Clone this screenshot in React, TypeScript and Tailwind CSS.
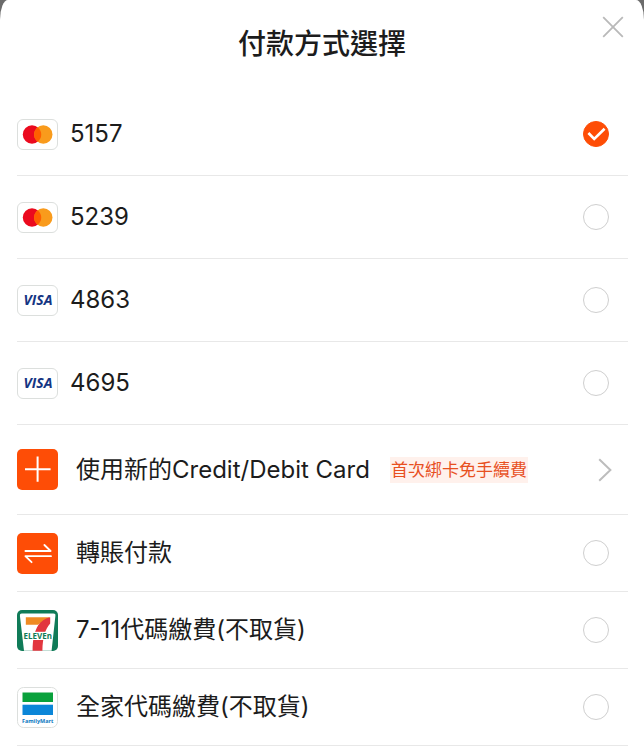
import React, { useState } from 'react';

type PaymentOption = {
    id: string;
    label: string;
    icon: React.ReactNode;
};

const MastercardIcon: React.FC = () => (
    <span className="flex h-[31px] w-[41px] shrink-0 items-center justify-center rounded-md border border-[#dcdfdd] bg-white">
        <svg width="31" height="19" viewBox="0 0 31 19" aria-hidden="true">
            <circle cx="10" cy="9.5" r="9.2" fill="#eb0a1e" />
            <circle cx="21.3" cy="9.5" r="9.2" fill="#f99b1c" />
            <path d="M15.65 2.2a9.2 9.2 0 0 1 0 14.6a9.2 9.2 0 0 1 0-14.6z" fill="#ff5f00" />
        </svg>
    </span>
);

const VisaIcon: React.FC = () => (
    <span className="flex h-[31px] w-[41px] shrink-0 items-center justify-center rounded-md border border-[#dcdfdd] bg-white pl-px font-['Open_Sans',sans-serif] text-[14px] leading-4 font-bold text-[#143583] italic">
        VISA
    </span>
);

const TransferIcon: React.FC = () => (
    <svg className="shrink-0" width="41" height="41" viewBox="0 0 41 41" aria-hidden="true">
        <rect width="41" height="41" rx="5" fill="#fe4d06" />
        <path
            d="M8.4 18h25.2l-6.2-6M34 23.2H8.4l6.2 6"
            fill="none"
            stroke="#fff"
            strokeWidth="1.8"
            strokeLinejoin="round"
            strokeLinecap="round"
        />
    </svg>
);

const PlusIcon: React.FC = () => (
    <svg className="shrink-0" width="41" height="41" viewBox="0 0 41 41" aria-hidden="true">
        <rect width="41" height="41" rx="5" fill="#fe4d06" />
        <path d="M20.6 7.5v25.2M8 20.2h25.6" stroke="#fff" strokeWidth="2" />
    </svg>
);

const SevenElevenIcon: React.FC = () => (
    <svg className="shrink-0" width="41" height="41" viewBox="0 0 41 41" aria-hidden="true">
        <rect width="41" height="41" rx="5" fill="#107b58" />
        <path d="M5 3.4h31.4a2 2 0 0 1 2 2.3L34.6 40.8H7L2.9 5.7a2 2 0 0 1 2.1-2.3z" fill="#fff" />
        <path d="M8.8 7.3h24.4L21 14.8H8.8z" fill="#ef8a22" />
        <path d="M33.2 7.3v6.2c-5 5.6-7.4 13.4-7.8 27.3h-9.8c0-11.6 1.6-19 5.6-25.6c3.4-4.4 7-6.9 12-7.9z" fill="#e2363f" />
        <rect x="7.2" y="21.8" width="27" height="8.2" fill="#fff" />
        <text
            x="20.7"
            y="28.8"
            textAnchor="middle"
            fontFamily="Noto Sans, sans-serif"
            fontSize="8"
            fontWeight="700"
            fill="#107b58"
        >
            ELEVEn
        </text>
    </svg>
);

const FamilyMartIcon: React.FC = () => (
    <svg className="shrink-0" width="41" height="41" viewBox="0 0 41 41" aria-hidden="true">
        <rect x="0.5" y="0.5" width="40" height="40" rx="6" fill="#fff" stroke="#dcdfdd" />
        <rect x="5.5" y="5.5" width="30.5" height="9.5" fill="#09a13c" />
        <rect x="5.5" y="17.7" width="30.5" height="10.3" fill="#0b86d8" />
        <text
            x="20.7"
            y="35.5"
            textAnchor="middle"
            fontFamily="Open Sans, sans-serif"
            fontSize="5.5"
            fontWeight="700"
            fill="#0b78bf"
        >
            FamilyMart
        </text>
    </svg>
);

const cards: PaymentOption[] = [
    { id: 'card-5157', label: '5157', icon: <MastercardIcon /> },
    { id: 'card-5239', label: '5239', icon: <MastercardIcon /> },
    { id: 'card-4863', label: '4863', icon: <VisaIcon /> },
    { id: 'card-4695', label: '4695', icon: <VisaIcon /> },
];

const others: PaymentOption[] = [
    { id: 'transfer', label: '轉賬付款', icon: <TransferIcon /> },
    { id: 'seven', label: '7-11代碼繳費(不取貨)', icon: <SevenElevenIcon /> },
    { id: 'family', label: '全家代碼繳費(不取貨)', icon: <FamilyMartIcon /> },
];

type RadioProps = {
    id: string;
    checked: boolean;
    onChange: () => void;
};

const Radio: React.FC<RadioProps> = ({ id, checked, onChange }) => (
    <span className="relative ml-auto flex shrink-0">
        <input
            type="radio"
            id={id}
            name="payment"
            checked={checked}
            onChange={onChange}
            className="size-[26px] appearance-none rounded-full border border-[#cfcfcf] bg-white checked:border-[#fe4d06] checked:bg-[#fe4d06]"
        />
        {checked && (
            <svg className="pointer-events-none absolute inset-0" width="26" height="26" viewBox="0 0 26 26" aria-hidden="true">
                <path d="M5.4 12l5.8 6L21.6 7.8" fill="none" stroke="#fff" strokeWidth="2.6" />
            </svg>
        )}
    </span>
);

const App: React.FC = () => {
    const [selected, setSelected] = useState<string>('card-5157');

    return (
        <div className="min-h-screen bg-[#6b6b6b] font-[Inter,'Noto_Sans_CJK_TC',sans-serif] text-[#1c1c1c]">
            <main className="min-h-screen rounded-t-[8px_20px] bg-white">
                <header className="relative flex h-[93px] justify-center pt-6">
                    <h1 className="text-[28px] leading-10 font-medium">付款方式選擇</h1>
                    <button type="button" aria-label="關閉" className="absolute top-4 right-5">
                        <svg width="22" height="22" viewBox="0 0 22 22" aria-hidden="true">
                            <path d="M1.2 1.2l19.6 19.6M20.8 1.2L1.2 20.8" stroke="#b9b9b9" strokeWidth="1.8" />
                        </svg>
                    </button>
                </header>

                <div className="mr-4 ml-[17px] text-2xl">
                    {cards.map((card) => (
                        <label
                            key={card.id}
                            htmlFor={card.id}
                            className="flex min-h-[83px] items-center gap-3 border-b border-[#e8e8e8] pr-[19px]"
                        >
                            {card.icon}
                            <span>{card.label}</span>
                            <Radio id={card.id} checked={selected === card.id} onChange={() => setSelected(card.id)} />
                        </label>
                    ))}

                    <button
                        type="button"
                        className="flex min-h-[90px] w-full items-center gap-[18px] border-b border-[#e8e8e8] pr-4 text-left"
                    >
                        <PlusIcon />
                        <span>使用新的Credit/Debit Card</span>
                        <span className="ml-0.5 bg-[#fff1ec] px-px text-[17px] leading-[26px] text-[#e8501f]">首次綁卡免手續費</span>
                        <svg className="ml-auto shrink-0" width="14" height="24" viewBox="0 0 14 24" aria-hidden="true">
                            <path d="M1.2 1.2L12.4 12L1.2 22.8" fill="none" stroke="#bdbdbd" strokeWidth="2" />
                        </svg>
                    </button>

                    {others.map((option) => (
                        <label
                            key={option.id}
                            htmlFor={option.id}
                            className="flex min-h-[77px] items-center gap-[18px] border-b border-[#e8e8e8] pr-[19px]"
                        >
                            {option.icon}
                            <span>{option.label}</span>
                            <Radio id={option.id} checked={selected === option.id} onChange={() => setSelected(option.id)} />
                        </label>
                    ))}
                </div>
            </main>
        </div>
    );
};

export default App;
